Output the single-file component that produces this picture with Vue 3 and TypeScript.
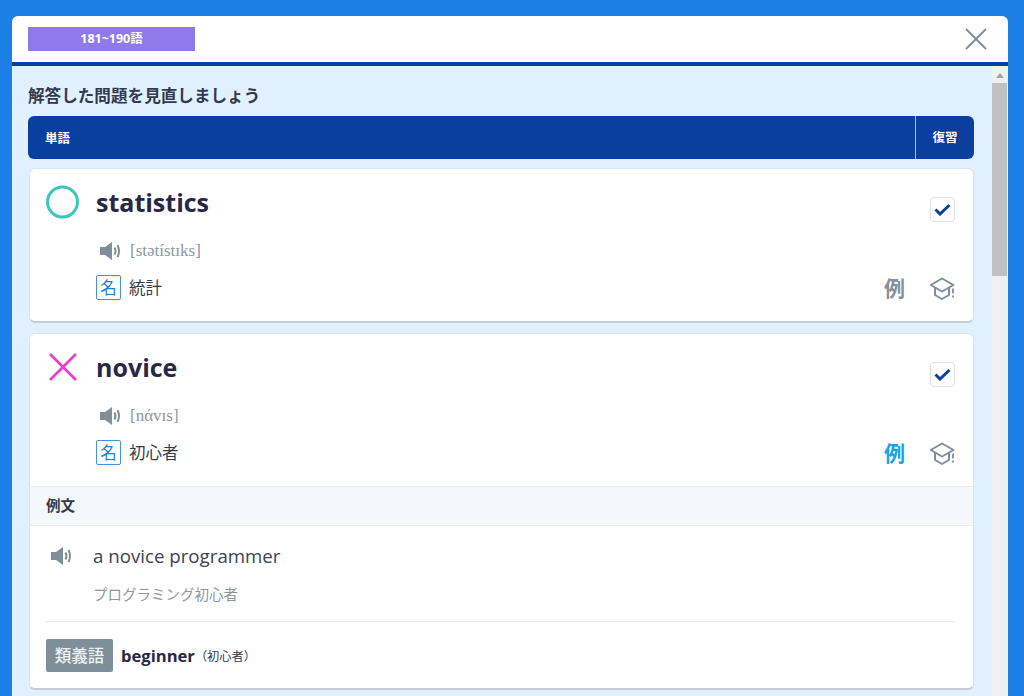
<script setup lang="ts">
interface Word {
  mark: 'ok' | 'ng'
  word: string
  phonetic: string
  meaning: string
  active: boolean
  open: boolean
}
const words: Word[] = [
  { mark: 'ok', word: 'statistics', phonetic: '[stətístɪks]', meaning: '統計', active: false, open: false },
  { mark: 'ng', word: 'novice', phonetic: '[nάvɪs]', meaning: '初心者', active: true, open: true },
]
</script>

<template>
  <div class="page">
    <div class="modal">
      <header class="head">
        <span class="range">181~190語</span>
        <svg class="close" viewBox="0 0 22 22" width="22" height="22">
          <path d="M1 1 21 21M21 1 1 21" fill="none" stroke="#7f8f99" stroke-width="2" />
        </svg>
      </header>
      <div class="frame">
        <main class="content">
          <h2 class="title">解答した問題を見直しましょう</h2>
          <div class="thead">
            <span class="th-word">単語</span>
            <span class="th-review">復習</span>
          </div>
          <article v-for="w in words" :key="w.word" class="card">
            <div class="main">
              <div class="mark">
                <svg v-if="w.mark === 'ok'" viewBox="0 0 34 34" width="34" height="34">
                  <circle cx="16.5" cy="17" r="15" fill="none" stroke="#3ec6bd" stroke-width="3" />
                </svg>
                <svg v-else viewBox="0 0 34 34" width="34" height="34">
                  <path d="M4 4 30 30M30 4 4 30" fill="none" stroke="#e83ccf" stroke-width="2.6" />
                </svg>
              </div>
              <div class="info">
                <div class="word-row">
                  <h3 class="word">{{ w.word }}</h3>
                  <span class="check">
                    <svg viewBox="0 0 17 13" width="17" height="13">
                      <path d="M1.5 6.5 6 11 15.5 2" fill="none" stroke="#0b40a0" stroke-width="3" />
                    </svg>
                  </span>
                </div>
                <div class="sound-row">
                  <svg class="speaker" viewBox="0 0 22 18" width="22" height="18">
                    <path d="M0 5H5L12 0V18L5 13H0Z" fill="#7f8f99" />
                    <path d="M14.5 5.5Q16.5 9 14.5 12.5M17.5 3Q20.5 9 17.5 15" fill="none" stroke="#7f8f99" stroke-width="2" />
                  </svg>
                  <span class="phonetic">{{ w.phonetic }}</span>
                </div>
                <div class="meaning-row">
                  <span class="pos">名</span>
                  <span class="meaning">{{ w.meaning }}</span>
                  <span class="rei" :class="{ on: w.active }">例</span>
                  <svg class="hat" viewBox="0 0 25 24" width="25" height="24">
                    <path d="M12 1.5 23.5 8 12 14.5 0.8 8Z" fill="none" stroke="#7f8f99" stroke-width="2" stroke-linejoin="round" />
                    <path d="M5 11V18L12 22 19 18V11" fill="none" stroke="#7f8f99" stroke-width="2" stroke-linejoin="round" />
                    <path d="M23 11.5V16.5M23 18.5V20.5" fill="none" stroke="#7f8f99" stroke-width="1.8" />
                  </svg>
                </div>
              </div>
            </div>
            <template v-if="w.open">
              <div class="ex-head">例文</div>
              <div class="ex-body">
                <div class="ex-row">
                  <svg class="speaker-sm" viewBox="0 0 22 18" width="22" height="18">
                    <path d="M0 5H5L12 0V18L5 13H0Z" fill="#7f8f99" />
                    <path d="M14.5 5.5Q16.5 9 14.5 12.5M17.5 3Q20.5 9 17.5 15" fill="none" stroke="#7f8f99" stroke-width="2" />
                  </svg>
                  <span class="ex-en">a novice programmer</span>
                </div>
                <p class="ex-ja">プログラミング初心者</p>
                <div class="syn">
                  <span class="syn-tag">類義語</span>
                  <strong class="syn-word">beginner</strong>
                  <span class="syn-ja">（初心者）</span>
                </div>
              </div>
            </template>
          </article>
        </main>
        <aside class="rail">
          <span class="arrow"></span>
          <span class="thumb"></span>
        </aside>
      </div>
    </div>
  </div>
</template>

<style>
html, body { margin: 0; background: #1c7fe6; overflow: hidden; }
</style>

<style scoped>
* { box-sizing: border-box; }
.page {
  height: 696px;
  padding: 16px 16px 0 12px;
  font-family: "Open Sans", "Noto Sans CJK JP", sans-serif;
  overflow: hidden;
}
.modal {
  height: 680px;
  display: flex;
  flex-direction: column;
  border-radius: 6px 6px 0 0;
  overflow: hidden;
}
.head {
  flex: none;
  height: 50px;
  background: #fff;
  border-bottom: 4px solid #0a3fa0;
  padding: 11px 21px 0 16px;
  display: flex;
  justify-content: space-between;
  align-items: flex-start;
}
.range {
  width: 167px;
  height: 24px;
  background: #8f7aec;
  color: #fff;
  font-size: 12.5px;
  font-weight: 700;
  line-height: 24px;
  text-align: center;
}
.close { margin-top: 1px; }
.frame {
  flex: 1;
  min-height: 0;
  display: flex;
  background: #e1f0ff;
}
.content {
  flex: 1;
  min-width: 0;
  padding: 18px 18px 0 16px;
  overflow: hidden;
}
.title {
  margin: 0 0 9px;
  height: 23px;
  font-size: 16.6px;
  line-height: 23px;
  font-weight: 700;
  color: #333a4d;
  white-space: nowrap;
}
.thead {
  height: 43px;
  background: #0a3fa0;
  border-radius: 6px;
  color: #fff;
  font-size: 12.5px;
  font-weight: 700;
  display: flex;
  align-items: center;
  justify-content: space-between;
}
.th-word { padding-left: 17px; }
.th-review {
  width: 59px;
  height: 43px;
  line-height: 43px;
  text-align: center;
  border-left: 1px solid #a9bde0;
}
.card {
  background: #fff;
  margin: 9px 0 10px 1px;
  border: 1px solid #dbe3ec;
  border-bottom: 2px solid #c6ccd2;
  border-radius: 6px;
  overflow: hidden;
}
.main {
  height: 152px;
  padding: 16px 18px 0 16px;
  display: flex;
}
.mark { width: 50px; flex: none; height: 34px; }
.info { flex: 1; min-width: 0; }
.word-row { display: flex; justify-content: space-between; height: 53px; }
.word {
  margin: 0;
  font-size: 25px;
  line-height: 34px;
  font-weight: 700;
  color: #282845;
}
.check {
  margin-top: 12px;
  width: 25px;
  height: 25px;
  border: 1px solid #dde1e6;
  border-radius: 4px;
  display: flex;
  align-items: center;
  justify-content: center;
}
.sound-row { display: flex; align-items: center; height: 24px; padding-left: 4px; margin-top: 1px; }
.speaker { margin-right: 8px; }
.phonetic {
  font-family: "Liberation Serif", serif;
  font-size: 17px;
  color: #8b98a2;
}
.meaning-row { display: flex; align-items: center; margin-top: 11px; height: 26px; }
.pos {
  width: 25px;
  height: 25px;
  border: 1px solid #3f94dc;
  border-radius: 2px;
  color: #1f7fd0;
  font-size: 16.5px;
  line-height: 23px;
  text-align: center;
}
.meaning { margin-left: 8px; font-size: 16.5px; color: #333a4d; flex: 1; }
.rei {
  font-size: 21px;
  font-weight: 700;
  color: #83929c;
  margin-right: 25px;
  line-height: 26px;
  position: relative;
  top: 1px;
}
.rei.on { color: #14a5ec; }
.hat { position: relative; top: 2px; }
.ex-head {
  height: 40px;
  background: #f4f7fc;
  border-top: 1px solid #e8ecf1;
  border-bottom: 1px solid #e8ecf1;
  padding-left: 16px;
  font-size: 14.5px;
  font-weight: 700;
  line-height: 38px;
  color: #333a4d;
}
.ex-body { padding: 16px 18px 16px 16px; }
.ex-row { display: flex; align-items: center; height: 26px; }
.speaker-sm { margin: 2px 20px 0 5px; }
.ex-en { font-size: 18.7px; color: #3e4257; }
.ex-ja {
  margin: 17px 0 0;
  padding: 0 0 16px 47px;
  font-size: 14.5px;
  line-height: 20px;
  color: #8b98a2;
  border-bottom: 1px solid #e8ecf1;
}
.syn { display: flex; align-items: center; margin-top: 17px; }
.syn-tag {
  width: 67px;
  height: 33px;
  background: #7f8f99;
  border-radius: 2px;
  color: #eef1f3;
  font-size: 16.5px;
  font-weight: 500;
  line-height: 33px;
  text-align: center;
}
.syn-word { margin-left: 8px; font-size: 16.6px; color: #282845; }
.syn-ja { font-size: 12.2px; color: #333a4d; }
.rail {
  flex: none;
  width: 16px;
  background: #f0f0f0;
  padding: 0 1px 0 0;
  display: flex;
  flex-direction: column;
  align-items: stretch;
}
.arrow {
  width: 0;
  height: 0;
  margin: 7px 0 5px 4px;
  border-left: 4px solid transparent;
  border-right: 4px solid transparent;
  border-bottom: 5px solid #a3a3a3;
}
.thumb { height: 193px; background: #c1c1c1; }
</style>
